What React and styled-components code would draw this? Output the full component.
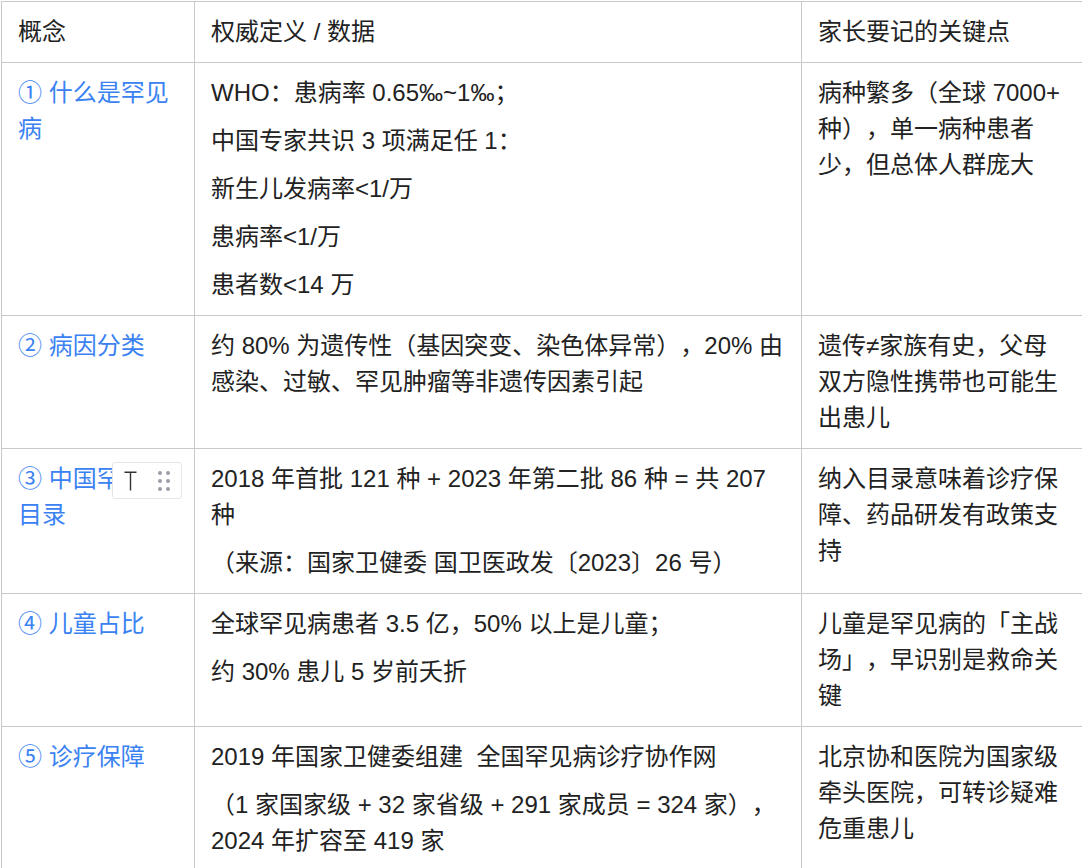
import React from 'react';
import styled, { createGlobalStyle } from 'styled-components';

const GlobalStyle = createGlobalStyle`
  html, body {
    margin: 0;
    padding: 0;
    background: #fff;
  }
  body {
    font-family: "Liberation Sans", "Noto Sans CJK SC", sans-serif;
    color: #222;
  }
`;

const Page = styled.div`
  padding: 1px 0 0 1px;
`;

const Table = styled.table`
  border-collapse: collapse;
  table-layout: fixed;
  width: 1081px;
  font-size: 24px;
  line-height: 36px;
  text-spacing-trim: space-all;
`;

const Col = styled.col`
  width: ${(props) => props.w}px;
`;

const Cell = styled.td`
  position: relative;
  border: 1px solid #c9c9c9;
  padding: 12px 16px;
  vertical-align: top;
  text-align: left;
  font-weight: 400;
  color: ${(props) => (props.link ? '#3a82f2' : '#222')};
`;

const Para = styled.p`
  margin: 0;
  white-space: pre-wrap;

  & + & {
    margin-top: 12px;
  }
`;

const Toolbar = styled.div`
  position: absolute;
  top: 13px;
  left: 110px;
  width: 70px;
  height: 37px;
  box-sizing: border-box;
  border: 1px solid #e6e6e6;
  border-radius: 3px;
  background: #fff;
  display: flex;
  align-items: center;
  padding: 0 0 0 11px;
  gap: 21px;
  color: #333;
`;

const TIcon = styled.svg`
  display: block;
`;

const Handle = styled.svg`
  display: block;
`;

const TextType = () => (
  <TIcon width="13" height="20" viewBox="0 0 13 20">
    <path d="M0.5 1.2H12.5M6.5 1.2V19.5" stroke="#333" strokeWidth="1.4" fill="none" />
  </TIcon>
);

const DragHandle = () => (
  <Handle width="12" height="20" viewBox="0 0 12 20">
    {[2, 10, 18].map((y) => [2, 10].map((x) => (
      <circle key={`${x}-${y}`} cx={x} cy={y} r="2" fill="#9a9ea6" />
    )))}
  </Handle>
);

const rows = [
  {
    title: '① 什么是罕见病',
    data: [
      'WHO：患病率 0.65‰~1‰；',
      '中国专家共识 3 项满足任 1：',
      '新生儿发病率<1/万',
      '患病率<1/万',
      '患者数<14 万',
    ],
    note: '病种繁多（全球 7000+ 种），单一病种患者少，但总体人群庞大',
  },
  {
    title: '② 病因分类',
    data: ['约 80% 为遗传性（基因突变、染色体异常），20% 由感染、过敏、罕见肿瘤等非遗传因素引起'],
    note: '遗传≠家族有史，父母双方隐性携带也可能生出患儿',
  },
  {
    title: '③ 中国罕见病目录',
    data: [
      '2018 年首批 121 种 + 2023 年第二批 86 种 = 共 207 种',
      '（来源：国家卫健委 国卫医政发〔2023〕26 号）',
    ],
    note: '纳入目录意味着诊疗保障、药品研发有政策支持',
    toolbar: true,
  },
  {
    title: '④ 儿童占比',
    data: ['全球罕见病患者 3.5 亿，50% 以上是儿童；', '约 30% 患儿 5 岁前夭折'],
    note: '儿童是罕见病的「主战场」，早识别是救命关键',
  },
  {
    title: '⑤ 诊疗保障',
    data: [
      '2019 年国家卫健委组建  全国罕见病诊疗协作网',
      '（1 家国家级 + 32 家省级 + 291 家成员 = 324 家），2024 年扩容至 419 家',
    ],
    note: '北京协和医院为国家级牵头医院，可转诊疑难危重患儿',
  },
];

function App() {
  return (
    <>
      <GlobalStyle />
      <Page>
        <Table>
          <colgroup>
            <Col w={193} />
            <Col w={607} />
            <Col w={281} />
          </colgroup>
          <thead>
            <tr>
              <Cell as="th">概念</Cell>
              <Cell as="th">权威定义 / 数据</Cell>
              <Cell as="th">家长要记的关键点</Cell>
            </tr>
          </thead>
          <tbody>
            {rows.map((row) => (
              <tr key={row.title}>
                <Cell link>
                  {row.title}
                  {row.toolbar && (
                    <Toolbar>
                      <TextType />
                      <DragHandle />
                    </Toolbar>
                  )}
                </Cell>
                <Cell>
                  {row.data.map((line) => <Para key={line}>{line}</Para>)}
                </Cell>
                <Cell>{row.note}</Cell>
              </tr>
            ))}
          </tbody>
        </Table>
      </Page>
    </>
  );
}

export default App;
